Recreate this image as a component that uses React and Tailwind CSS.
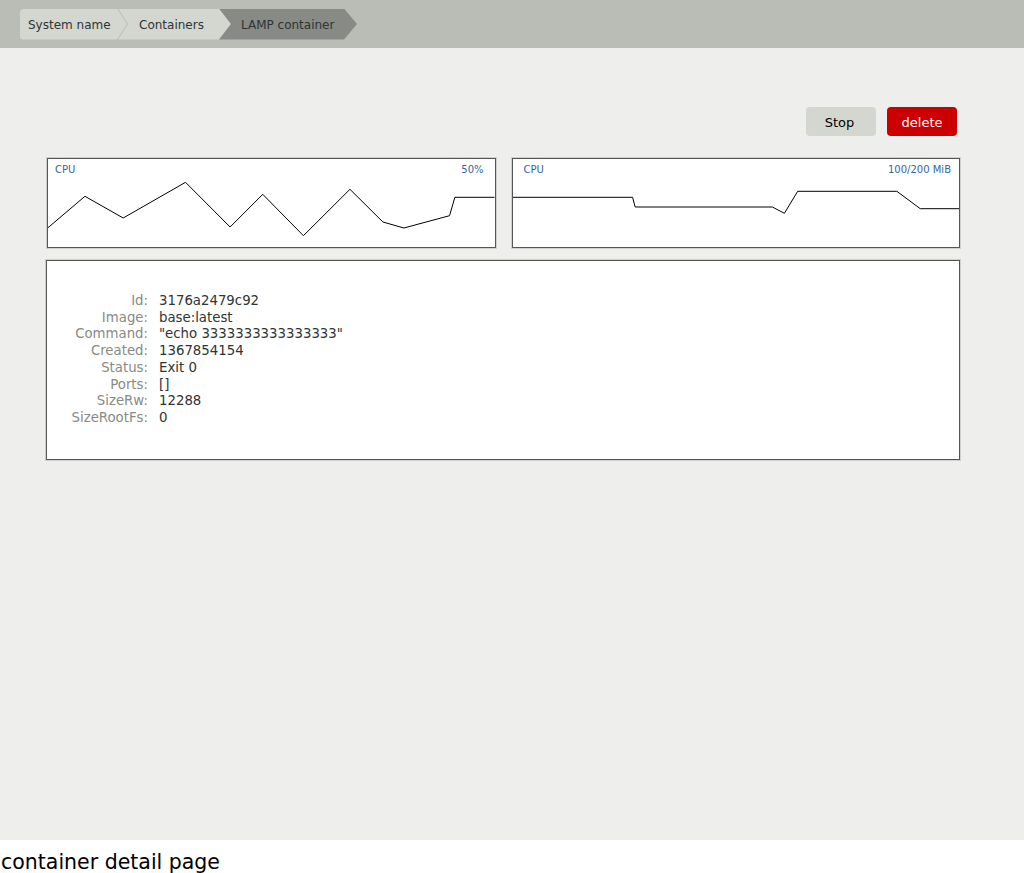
import React from "react";

const font = { fontFamily: '"DejaVu Sans", "Liberation Sans", sans-serif' };

function Chart({ label, value, points, padL, padR }) {
  return (
    <div className="relative h-[90px] bg-white border border-[#555753] shadow-[0_0_0_1px_#cfd0cd]">
      <svg
        className="absolute inset-0 w-full h-full"
        viewBox="0 0 447 88"
        preserveAspectRatio="none"
      >
        <polyline points={points} fill="none" stroke="#000" strokeWidth="1" />
      </svg>
      <div className={`relative flex justify-between pt-[3px] text-[10px] text-[#3465a4] ${padL} ${padR}`}>
        <span>{label}</span>
        <span>{value}</span>
      </div>
    </div>
  );
}

export default function App() {
  const info = [
    ["Id", "3176a2479c92"],
    ["Image", "base:latest"],
    ["Command", '"echo 3333333333333333"'],
    ["Created", "1367854154"],
    ["Status", "Exit 0"],
    ["Ports", "[]"],
    ["SizeRw", "12288"],
    ["SizeRootFs", "0"],
  ];

  return (
    <div className="h-[873px] flex flex-col bg-white" style={font}>
      <header className="h-12 bg-[#babdb6] flex items-center pl-5 text-[12px] text-[#2e3436]">
        <div className="flex h-[31px]">
          <div
            className="w-[107px] h-full bg-[#d3d7cf] rounded-l-[4px] flex items-center pl-2 pt-px"
            style={{ clipPath: "polygon(0 0, calc(100% - 10px) 0, 100% 50%, calc(100% - 10px) 100%, 0 100%)" }}
          >
            System name
          </div>
          <div
            className="w-[113px] -ml-[9px] h-full bg-[#d3d7cf] flex items-center pl-[21px] pt-px"
            style={{ clipPath: "polygon(0 0, calc(100% - 12px) 0, 100% 50%, calc(100% - 12px) 100%, 0 100%, 10px 50%)" }}
          >
            Containers
          </div>
          <div
            className="w-[138px] -ml-[12px] h-full bg-[#888a85] flex items-center pl-[22px] pt-px"
            style={{ clipPath: "polygon(0 0, calc(100% - 13px) 0, 100% 50%, calc(100% - 13px) 100%, 0 100%, 12px 50%)" }}
          >
            LAMP container
          </div>
        </div>
      </header>

      <main className="flex-1 bg-[#eeeeec] pl-[46px] pr-[64px] pt-[59px]">
        <div className="flex justify-end gap-[11px] mr-[3px] text-[13px]">
          <button className="w-[70px] h-[29px] pt-[2px] pr-[3px] rounded-[4px] bg-[#d3d7cf] text-black">Stop</button>
          <button className="w-[70px] h-[29px] pt-[2px] rounded-[4px] bg-[#cc0000] text-white">delete</button>
        </div>

        <div className="grid grid-cols-2 gap-4 mt-[22px] pl-px">
          <Chart
            label="CPU"
            value="50%"
            padL="pl-[7px]"
            padR="pr-[11px]"
            points="0,68.7 37,37.3 75.3,59 137.7,23.3 182.3,68 215,35.3 255.7,76.7 302.3,30.3 335.3,63 356.3,69 402,56.7 407.3,38.3 447,38.3"
          />
          <Chart
            label="CPU"
            value="100/200 MiB"
            padL="pl-[11px]"
            padR="pr-[8px]"
            points="0,38.3 119.7,38.3 122.3,48 259.7,48 271.7,54.3 285,32.3 384.3,32.3 407.7,49.7 447,49.7"
          />
        </div>

        <div className="mt-3 h-[200px] bg-white border border-[#555753] shadow-[0_0_0_1px_#cfd0cd] pt-[32px]">
          <div className="grid grid-cols-[101px_1fr] gap-x-[11px] text-[13.3px] leading-[16.7px]">
            {info.map(([k, v]) => (
              <React.Fragment key={k}>
                <span className="text-right text-[#888a85]">{k}:</span>
                <span className="text-[#2e3436]">{v}</span>
              </React.Fragment>
            ))}
          </div>
        </div>
      </main>

      <footer className="h-[33px] bg-white text-[20.5px] leading-[24px] pt-[10px] pl-px text-black">
        container detail page
      </footer>
    </div>
  );
}
